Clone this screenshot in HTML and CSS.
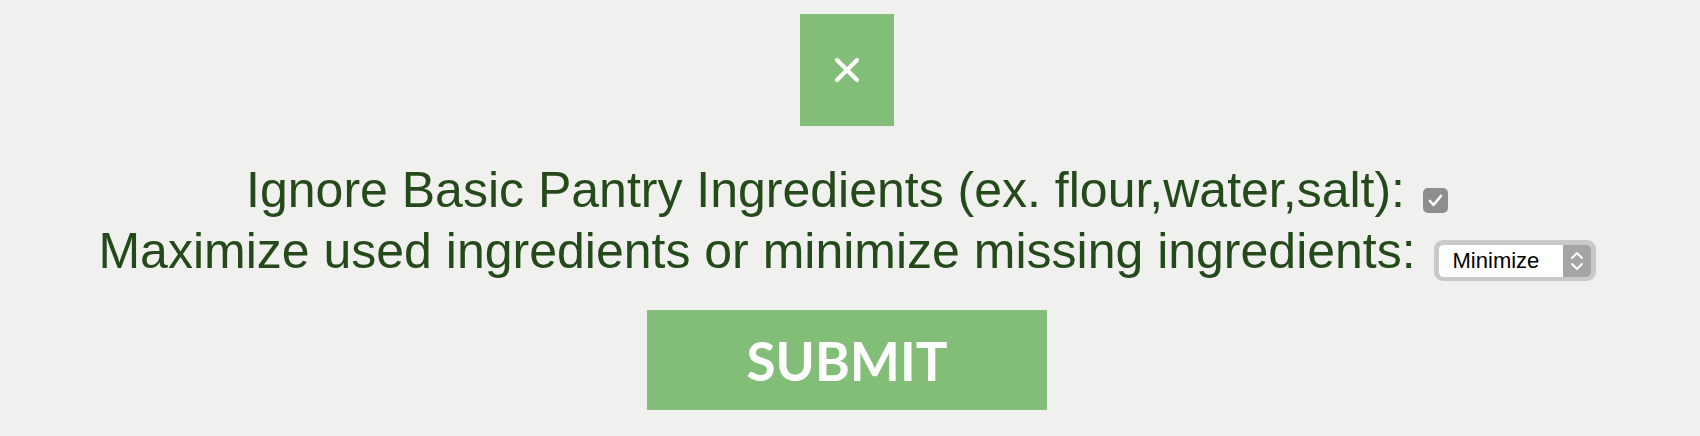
FILE: index.html
```html
<!DOCTYPE html>
<html>
<head>
<meta charset="utf-8">
<title>Recipe Options</title>
<link rel="stylesheet" href="styles.css">
</head>
<body>
<div class="wrapper">
	<button class="close" type="button">
		<svg width="26" height="26" viewBox="0 0 26 26"><path d="M3 3 L23 23 M23 3 L3 23" stroke="#fff" stroke-width="4.2" stroke-linecap="round"/></svg>
	</button>
	<form class="options">
		<div class="line">Ignore Basic Pantry Ingredients (ex. flour,water,salt): <svg class="check" width="25" height="25" viewBox="0 0 25 25"><rect width="25" height="25" rx="5" fill="#8e8e91"/><path d="M7 13 L10.5 17 L18 8" fill="none" stroke="#fff" stroke-width="2.6" stroke-linecap="round" stroke-linejoin="round"/></svg></div>
		<div class="line">Maximize used ingredients or minimize missing ingredients: <div class="select"><span class="value">Minimize</span><span class="arrows"><svg width="14" height="22" viewBox="0 0 14 22"><path d="M2 8 L7 3 L12 8 M2 14 L7 19 L12 14" fill="none" stroke="#fff" stroke-width="2" stroke-linecap="round" stroke-linejoin="round"/></svg></span></div></div>
		<button class="submit" type="button">SUBMIT</button>
	</form>
</div>
</body>
</html>
```
FILE: styles.css
```css
body{
	margin: 0;
	padding: 0;
	background: #f0f0ee;
	font-family: "Liberation Sans", Arial, Helvetica, sans-serif;
}
.wrapper{
	display: flex;
	flex-direction: column;
	align-items: center;
	padding-top: 14px;
	margin-left: -6px;
}
.close{
	width: 94px;
	height: 112px;
	border: 0;
	padding: 0;
	background: #82be78;
	display: flex;
	align-items: center;
	justify-content: center;
	cursor: pointer;
}
.options{
	margin: 34px 0 0;
	display: flex;
	flex-direction: column;
	align-items: center;
}
.line{
	font-size: 50px;
	line-height: 61px;
	color: #244a1b;
	text-align: center;
	white-space: nowrap;
}
.check{
	vertical-align: -6px;
	margin-left: 4px;
}
.select{
	display: inline-flex;
	margin-left: 4px;
	border-style: solid;
	border-color: #c9c9c9;
	border-width: 5px 5px 4px 5px;
	border-radius: 9px;
	background: #c9c9c9;
	overflow: hidden;
}
.select .value{
	width: 110px;
	padding-left: 14px;
	height: 32px;
	line-height: 32px;
	font-size: 22px;
	color: #000;
	background: #fff;
	text-align: left;
	border-radius: 4px 0 0 4px;
}
.select .arrows{
	width: 28px;
	height: 32px;
	background: #a4a4a7;
	display: flex;
	align-items: center;
	justify-content: center;
	border-radius: 0 5px 5px 0;
}
.submit{
	margin-top: 28px;
	width: 400px;
	height: 100px;
	border: 0;
	padding: 0;
	background: #82be78;
	color: #fff;
	font-family: Lato, "Liberation Sans", sans-serif;
	font-weight: bold;
	font-size: 53px;
	line-height: 1;
	cursor: pointer;
}
```
